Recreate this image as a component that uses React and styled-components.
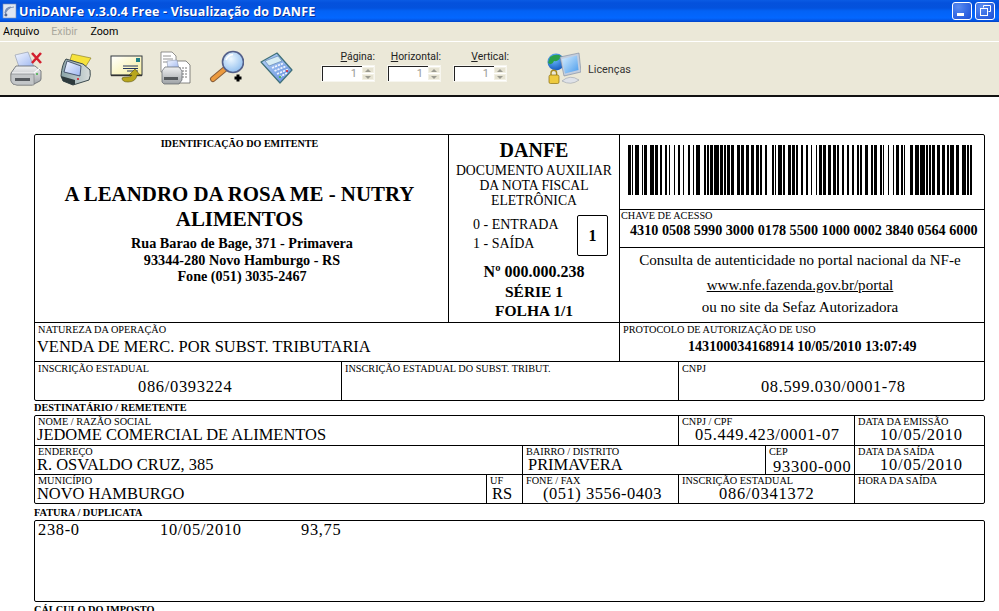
import React from 'react'
import styled, { createGlobalStyle } from 'styled-components'

const GlobalStyle = createGlobalStyle`
  html, body { margin: 0; padding: 0; background: #fff; }
  #root { width: 999px; height: 611px; overflow: hidden; }
`

const Wrapper = styled.div`
  width: 999px;
  height: 611px;
  overflow: hidden;
  display: flex;
  flex-direction: column;
  background: #fff;
`

const TitleBar = styled.div`
  height: 22px;
  flex: none;
  display: flex;
  align-items: center;
  padding: 0 4px 0 2px;
  box-sizing: border-box;
  background: linear-gradient(180deg, #0a5be4 0, #0451dc 3px, #0352dd 8px, #0362f5 11px, #0367ff 18px, #0458e8 20px, #0042c8 22px);
`

const AppIcon = styled.svg`
  width: 16px;
  height: 16px;
  flex: none;
`

const TitleText = styled.div`
  margin-left: 1px;
  flex: 1;
  color: #fff;
  font: bold 12.5px "Open Sans", "Liberation Sans", sans-serif;
  letter-spacing: 0.18px;
  text-shadow: 1px 1px 0 #0a2f9c;
  white-space: nowrap;
`

const WinButton = styled.div`
  width: 20px;
  height: 18px;
  margin-left: 3px;
  box-sizing: border-box;
  border: 1px solid #fff;
  border-radius: 3px;
  position: relative;
  background: radial-gradient(circle at 30% 25%, #5b8cf0 0, #3a6fe6 45%, #1c4fd6 100%);
`

const MinGlyph = styled.span`
  position: absolute;
  left: 4px;
  bottom: 3px;
  width: 7px;
  height: 3px;
  background: #fff;
`

const RestoreGlyph = styled.svg`
  position: absolute;
  left: 4px;
  top: 2px;
  width: 11px;
  height: 11px;
`

const MenuBar = styled.div`
  height: 19px;
  flex: none;
  display: flex;
  align-items: center;
  background: #ebe8d8;
  font: 10.7px Roboto, "Liberation Sans", sans-serif;
`

const MenuItem = styled.span`
  margin-left: ${p => p.$gap}px;
  color: ${p => (p.$disabled ? '#a9a79c' : '#000')};
`

const Toolbar = styled.div`
  height: 56px;
  flex: none;
  box-sizing: border-box;
  border-top: 1px solid #fff;
  border-bottom: 2px solid #111;
  background: #ebe8d8;
  display: flex;
  align-items: center;
  font: 10.4px Roboto, "Liberation Sans", sans-serif;
  color: #222;
`

const ToolButton = styled.div`
  width: 50px;
  height: 36px;
  flex: none;
  margin-top: -2px;
  margin-left: ${p => (p.$first ? '8px' : '0')};
  display: flex;
`

const Tool = styled.svg`
  width: 36px;
  height: 36px;
`

const SpinGroup = styled.div`
  display: flex;
  gap: 12px;
  margin-left: 13px;
  margin-top: -4px;
`

const Spin = styled.div`
  width: 54px;
  display: flex;
  flex-direction: column;
  align-items: flex-end;
`

const SpinLabel = styled.label`
  line-height: 11px;
  height: 14px;
  white-space: nowrap;
  margin-right: ${p => p.$nudge || 0}px;
`

const SpinBox = styled.div`
  width: 54px;
  height: 17px;
  box-sizing: border-box;
  border: 1px solid #f7f6ef;
  background: #fff;
  display: flex;
`

const SpinValue = styled.div`
  flex: 1;
  border-left: 1px solid #222;
  border-top: 1px solid #222;
  color: #9a9a94;
  font-size: 11px;
  line-height: 14px;
  text-align: right;
  padding-right: 5px;
`

const SpinArrows = styled.div`
  width: 12px;
  display: flex;
  flex-direction: column;
  gap: 1px;
  padding: 1px 0;
  box-sizing: border-box;
  background: #fff;
`

const SpinArrow = styled.div`
  flex: 1;
  background: #e6e3d2;
  border: 1px solid #f2f0e4;
  box-sizing: border-box;
  display: flex;
  align-items: center;
  justify-content: center;

  &::after {
    content: '';
    border-left: 3px solid transparent;
    border-right: 3px solid transparent;
    ${p => (p.$down ? 'border-top: 3px solid #9a9a90;' : 'border-bottom: 3px solid #9a9a90;')}
  }
`

const License = styled.div`
  display: flex;
  align-items: center;
  margin-left: 38px;
  gap: 7px;
  margin-top: -2px;
`

const LicenseText = styled.span`
  margin-top: 3px;
  font-size: 10.8px;
  color: #333;
`

const Page = styled.div`
  flex: 1;
  min-height: 0;
  padding: 37px 0 0 34px;
  box-sizing: border-box;
  font-family: "Liberation Serif", "Times New Roman", serif;
  color: #000;
`

const Box = styled.div`
  width: 951px;
  box-sizing: border-box;
  border: 1px solid #000;
  border-radius: 2px;
  ${p => p.$height && `height: ${p.$height}px;`}
`

const Row = styled.div`
  display: grid;
  grid-template-columns: ${p => p.$cols};
  height: ${p => p.$height}px;
  box-sizing: border-box;
  border-bottom: ${p => (p.$last ? 'none' : '1px solid #000')};
`

const Cell = styled.div`
  box-sizing: border-box;
  min-width: 0;
  padding-left: 2px;
  border-right: ${p => (p.$last ? 'none' : '1px solid #000')};
`

const Label = styled.div`
  font-size: 10.25px;
  line-height: 10px;
  padding-left: 1px;
  white-space: nowrap;
  margin-top: ${p => p.$top || 0}px;
`

const Value = styled.div`
  font-size: ${p => p.$size || 16.45}px;
  line-height: ${p => p.$lh || 17}px;
  letter-spacing: ${p => p.$numeric || 0}px;
  white-space: nowrap;
  padding-left: ${p => p.$indent || 0}px;
  margin-top: ${p => p.$top || 0}px;
  font-weight: ${p => (p.$bold ? 'bold' : 'normal')};
`

const SectionTitle = styled.div`
  font-size: 10.3px;
  font-weight: bold;
  height: ${p => p.$height}px;
  line-height: ${p => p.$lh}px;
  white-space: nowrap;
`

const Emitter = styled.div`
  height: 100%;
  text-align: center;
  margin-left: -2px;
`

const EmitterCaption = styled.div`
  font-size: 10.1px;
  font-weight: bold;
  line-height: 12px;
  padding: 3px 4px 0 0;
`

const CompanyName = styled.div`
  font-size: 20.9px;
  font-weight: bold;
  line-height: 25px;
  margin: 32px 23px 0 19px;
`

const CompanyLine = styled.div`
  font-size: 14.2px;
  font-weight: bold;
  line-height: 16.5px;
  padding-left: 1px;
`

const CompanyLines = styled.div`
  margin-top: 3px;
`

const Danfe = styled.div`
  margin-left: -2px;
  display: flex;
  flex-direction: column;
  align-items: center;
  height: 100%;
`

const DanfeTitle = styled.div`
  font-size: 20px;
  font-weight: bold;
  line-height: 26px;
  margin-top: 2px;
`

const DanfeSub = styled.div`
  font-size: 13.7px;
  line-height: 15px;
  text-align: center;
`

const Operation = styled.div`
  width: 100%;
  display: flex;
  padding: 7px 0 0 24px;
  box-sizing: border-box;
`

const OperationList = styled.div`
  flex: 1;
  font-size: 14px;
  line-height: 19px;
`

const OperationBox = styled.div`
  width: 31px;
  height: 41px;
  margin-right: 11px;
  box-sizing: border-box;
  border: 1px solid #000;
  border-radius: 2px;
  font-size: 16px;
  font-weight: bold;
  display: flex;
  align-items: center;
  justify-content: center;
`

const DanfeLine = styled.div`
  font-size: ${p => p.$size}px;
  font-weight: bold;
  line-height: 19px;
  margin-top: ${p => p.$top}px;
`

const RightStack = styled.div`
  margin-left: -2px;
  display: flex;
  flex-direction: column;
  height: 100%;
`

const BarcodeBlock = styled.div`
  height: 75px;
  box-sizing: border-box;
  border-bottom: 1px solid #000;
  padding: 10px 0 0 8px;
`

const KeyBlock = styled.div`
  height: 38px;
  box-sizing: border-box;
  border-bottom: 1px solid #000;
  padding-top: 1px;
`

const KeyValue = styled.div`
  font-size: 14.2px;
  font-weight: bold;
  line-height: 16px;
  padding-left: 10px;
  margin-top: 1px;
  white-space: nowrap;
`

const Consult = styled.div`
  flex: 1;
  text-align: center;
  font-size: 15.1px;
  padding-right: 4px;
`

const ConsultLine = styled.div`
  line-height: ${p => p.$lh}px;
  text-decoration: ${p => (p.$link ? 'underline' : 'none')};
  white-space: nowrap;
`

const InvoiceRow = styled.div`
  display: flex;
  font-size: 16.4px;
  letter-spacing: 0.7px;
  line-height: 18px;
  padding: 0 0 0 3px;
`

const InvoiceCol = styled.span`
  width: ${p => p.$w}px;
`

// Code 128 widths, index = symbol value
const CODE128 = '212222 222122 222221 121223 121322 131222 122213 122312 132212 221213 221312 231212 112232 122132 122231 113222 123122 123221 223211 221132 221231 213212 223112 312131 311222 321122 321221 312212 322112 322211 212123 212321 232121 111323 131123 131321 112313 132113 132311 211313 231113 231311 112133 112331 132131 113123 113321 133121 313121 211331 231131 213113 213311 213131 311123 311321 331121 312113 312311 332111 314111 221411 431111 111224 111422 121124 121421 141122 141221 112214 112412 122114 122411 142112 142211 241211 221114 413111 241112 134111 111242 121142 121241 114212 124112 124211 411212 421112 421211 212141 214121 412121 111143 111341 131141 114113 114311 411113 411311 113141 114131 311141 411131 211412 211214 211232'.split(' ')

function barcodeRuns(key) {
  const values = [105]
  for (let i = 0; i < key.length; i += 2) values.push(Number(key.slice(i, i + 2)))
  const check = values.reduce((sum, v, i) => sum + v * (i === 0 ? 1 : i), 0) % 103
  const pattern = [...values, check].map(v => CODE128[v]).join('') + '2331112'
  return pattern.split('').map(Number)
}

function Barcode({ code }) {
  const runs = barcodeRuns(code)
  const total = runs.reduce((a, b) => a + b, 0)
  let x = 0
  const bars = runs.map((w, i) => {
    const bar = i % 2 === 0 ? <rect key={i} x={x} y="0" width={w + 0.2} height="50" fill="#000" /> : null
    x += w
    return bar
  })
  return (
    <svg width="344" height="50" viewBox={`0 0 ${total} 50`} preserveAspectRatio="none" shapeRendering="crispEdges" style={{ display: 'block' }}>
      {bars}
    </svg>
  )
}

const PrinterBody = () => (
  <g>
    <path d="M3 23 L8 16 H27 L33 21 V29 Q33 31 30 32 L24 35 H9 Q4 35 3 31 Z" fill="url(#grayBody)" stroke="#5d6268" strokeWidth="0.8" />
    <path d="M4 23 H26 L32 18" fill="none" stroke="#fafafa" strokeWidth="1.2" />
    <path d="M3 24 H26 V35 H9 Q4 35 3 31 Z" fill="#c3c6c8" stroke="#6a6e72" strokeWidth="0.5" />
    <rect x="7" y="28" width="15" height="3" fill="#565a5e" />
    <circle cx="29" cy="24" r="1" fill="#3cb043" />
  </g>
)

const Gradients = () => (
  <svg width="0" height="0" style={{ position: 'absolute' }}>
    <defs>
      <linearGradient id="grayBody" x1="0" y1="0" x2="0" y2="1">
        <stop offset="0" stopColor="#f0f1f2" />
        <stop offset="1" stopColor="#9da1a5" />
      </linearGradient>
      <linearGradient id="paperBlue" x1="0" y1="0" x2="1" y2="1">
        <stop offset="0" stopColor="#f4f7ff" />
        <stop offset="1" stopColor="#9db6f0" />
      </linearGradient>
      <linearGradient id="tealBody" x1="0" y1="0" x2="1" y2="0">
        <stop offset="0" stopColor="#8aa4a8" />
        <stop offset="1" stopColor="#d8dddc" />
      </linearGradient>
      <radialGradient id="lens" cx="0.4" cy="0.35" r="0.7">
        <stop offset="0" stopColor="#eef8ff" />
        <stop offset="1" stopColor="#8dbcee" />
      </radialGradient>
      <linearGradient id="envelope" x1="0" y1="0" x2="1" y2="1">
        <stop offset="0" stopColor="#fff" />
        <stop offset="1" stopColor="#f6ed9a" />
      </linearGradient>
      <linearGradient id="calc" x1="0" y1="0" x2="1" y2="1">
        <stop offset="0" stopColor="#b8d4f8" />
        <stop offset="1" stopColor="#5f8cdc" />
      </linearGradient>
      <linearGradient id="monitor" x1="0" y1="0" x2="1" y2="1">
        <stop offset="0" stopColor="#d7eeff" />
        <stop offset="1" stopColor="#4a9cec" />
      </linearGradient>
      <radialGradient id="globe" cx="0.4" cy="0.3" r="0.8">
        <stop offset="0" stopColor="#6fc0ff" />
        <stop offset="1" stopColor="#0c4fb8" />
      </radialGradient>
    </defs>
  </svg>
)

const PrintCancelIcon = () => (
  <Tool viewBox="0 0 36 36">
    <path d="M7 5 L20 2 L26 17 H11 Z" fill="url(#paperBlue)" stroke="#8a94a8" strokeWidth="0.6" />
    <PrinterBody />
    <path d="M24 3 L33 13 M33 3 L24 13" stroke="#d3202f" strokeWidth="2.6" />
  </Tool>
)

const PrintIcon = () => (
  <Tool viewBox="0 0 36 36">
    <path d="M14 4 L33 8 L28 16 L12 10 Z" fill="#f6e23c" stroke="#7d7320" strokeWidth="0.6" />
    <path d="M3 26 Q4 14 8 9 L25 14 L32 20 Q33 26 31 30 L15 35 L5 31 Z" fill="url(#tealBody)" stroke="#3c4a4e" strokeWidth="1" strokeLinejoin="round" />
    <path d="M9 11 L23 16 L22 26 L6 22 Z" fill="url(#paperBlue)" stroke="#2f3c55" strokeWidth="0.8" />
    <path d="M3 26 L17 30 L17 34 L15 35 L5 31 Z" fill="#2e3a3d" />
    <circle cx="20" cy="29" r="1.1" fill="#d3202f" />
  </Tool>
)

const MailIcon = () => (
  <Tool viewBox="0 0 36 36">
    <rect x="3" y="6" width="31" height="19" fill="url(#envelope)" stroke="#33383f" strokeWidth="1" />
    <path d="M3 25.5 H34" stroke="#333" strokeWidth="1.4" fill="none" />
    <rect x="28" y="8" width="4" height="4" fill="#1f7f84" />
    <path d="M15 16 H30 M15 18.5 H30 M19 21 H30" stroke="#26365f" strokeWidth="1.2" />
    <path d="M14 28 Q14 32 20 32 Q28 32 29 25 L32 25 L27 19 L21 25 H24 Q24 27 20 27 Q15 27 14 28 Z" fill="#b8a61c" stroke="#5d5410" strokeWidth="0.6" />
  </Tool>
)

const PreviewIcon = () => (
  <Tool viewBox="0 0 36 36">
    <path d="M3 2 H14 L18 6 V22 H3 Z" fill="#fff" stroke="#666" strokeWidth="0.7" />
    <path d="M5 6 H13 M5 9 H15 M5 12 H15" stroke="#777" strokeWidth="0.8" />
    <path d="M18 11 H28 L32 15 V33 H18 Z" fill="#fff" stroke="#555" strokeWidth="0.7" />
    <path d="M21 18 H30 M21 21 H30 M21 24 H30 M21 27 H30" stroke="#777" strokeWidth="1" strokeDasharray="2 1" />
    <path d="M9 11 L19 10 L21 19 H10 Z" fill="url(#paperBlue)" stroke="#7b86a0" strokeWidth="0.5" />
    <path d="M4 21 L7 17 H21 L24 21 V30 L21 34 H6 L4 32 Z" fill="url(#grayBody)" stroke="#5d6268" strokeWidth="0.7" />
    <rect x="6" y="27" width="14" height="3" fill="#55595d" />
  </Tool>
)

const ZoomIcon = () => (
  <Tool viewBox="0 0 36 36">
    <path d="M5 29 L17 19" stroke="#8a5f3a" strokeWidth="6" strokeLinecap="round" />
    <path d="M5 29 L17 19" stroke="#ec9a3e" strokeWidth="4" strokeLinecap="round" />
    <circle cx="25" cy="12" r="10.5" fill="url(#lens)" stroke="#54608a" strokeWidth="1.6" />
    <path d="M18 10 Q20 5 25 4.5" stroke="#fff" strokeWidth="1.6" fill="none" />
    <path d="M26.5 28 H33.5 M30 24.5 V31.5" stroke="#000" strokeWidth="3" />
  </Tool>
)

const CalcIcon = () => (
  <Tool viewBox="0 0 36 36">
    <path d="M19 3 L3 12 L22 33 L34 20 Z" fill="url(#calc)" stroke="#3f7079" strokeWidth="1.2" strokeLinejoin="round" />
    <path d="M7 11 L20 6 L24 11 L11 16 Z" fill="#d7ecf4" stroke="#547aa8" strokeWidth="0.6" />
    <path d="M14 18 L26 13 M16.5 21 L28.5 16 M19 24 L31 19 M21.5 27 L29 23" stroke="#eef3ff" strokeWidth="1.8" strokeDasharray="2.2 1" />
    <circle cx="29" cy="21" r="1.1" fill="#d3202f" />
    <circle cx="22" cy="27" r="1.1" fill="#3cb043" />
  </Tool>
)

const LicenseIcon = () => (
  <Tool viewBox="0 0 36 36">
    <circle cx="11" cy="12" r="8.5" fill="url(#globe)" />
    <path d="M5 7 Q11 3 16 6 Q14 12 9 11 Q7 16 3 13 Z" fill="#2aa04a" />
    <path d="M15 7 L34 3 L36 22 L19 26 Z" fill="#c4cede" stroke="#7a869a" strokeWidth="0.6" />
    <path d="M17 9 L32 5.5 L33.5 20 L20 23.5 Z" fill="url(#monitor)" />
    <path d="M17 31 Q25 24 34 30 Q26 36 17 31 Z" fill="#dfe2e8" stroke="#8a92a0" strokeWidth="0.5" />
    <path d="M6 26 V23 A2.8 2.8 0 0 1 11.6 23 V26" fill="none" stroke="#a88a20" strokeWidth="1.4" />
    <rect x="4" y="25" width="10" height="8.5" rx="1.5" fill="#eeca3f" stroke="#8a6d10" strokeWidth="0.7" />
  </Tool>
)

function SpinField({ mnemonic, rest, nudge }) {
  return (
    <Spin>
      <SpinLabel $nudge={nudge}><u>{mnemonic}</u>{rest}</SpinLabel>
      <SpinBox>
        <SpinValue>1</SpinValue>
        <SpinArrows>
          <SpinArrow />
          <SpinArrow $down />
        </SpinArrows>
      </SpinBox>
    </Spin>
  )
}

function App() {
  return (
    <Wrapper>
      <GlobalStyle />
      <Gradients />
      <TitleBar>
        <AppIcon viewBox="0 0 16 16">
          <rect x="1" y="1" width="13" height="14" fill="#dfe6f2" stroke="#7d8db0" strokeWidth="0.6" />
          <path d="M3 13 A9 9 0 0 1 12 4 M3 10 A6 6 0 0 1 9 4" stroke="#7b8fb5" strokeWidth="1.2" fill="none" />
          <circle cx="4" cy="12" r="1.4" fill="#55688f" />
        </AppIcon>
        <TitleText>UniDANFe v.3.0.4 Free - Visualização do DANFE</TitleText>
        <WinButton><MinGlyph /></WinButton>
        <WinButton>
          <RestoreGlyph viewBox="0 0 11 11">
            <path d="M3.5 2.5 V0.5 H10.5 V6.5 H8.5" fill="none" stroke="#fff" />
            <rect x="0.5" y="3.5" width="7" height="7" fill="none" stroke="#fff" />
          </RestoreGlyph>
        </WinButton>
      </TitleBar>
      <MenuBar>
        <MenuItem $gap={3}>Arquivo</MenuItem>
        <MenuItem $gap={12} $disabled>Exibir</MenuItem>
        <MenuItem $gap={13}>Zoom</MenuItem>
      </MenuBar>
      <Toolbar>
        <ToolButton $first><PrintCancelIcon /></ToolButton>
        <ToolButton><PrintIcon /></ToolButton>
        <ToolButton><MailIcon /></ToolButton>
        <ToolButton><PreviewIcon /></ToolButton>
        <ToolButton><ZoomIcon /></ToolButton>
        <ToolButton><CalcIcon /></ToolButton>
        <SpinGroup>
          <SpinField mnemonic="P" rest="ágina:" />
          <SpinField mnemonic="H" rest="orizontal:" />
          <SpinField mnemonic="V" rest="ertical:" nudge={-2} />
        </SpinGroup>
        <License>
          <LicenseIcon />
          <LicenseText>Licenças</LicenseText>
        </License>
      </Toolbar>
      <Page>
        <Box>
          <Row $cols="414px 171px 1fr" $height={188}>
            <Cell>
              <Emitter>
                <EmitterCaption>IDENTIFICAÇÃO DO EMITENTE</EmitterCaption>
                <CompanyName>A LEANDRO DA ROSA ME - NUTRY ALIMENTOS</CompanyName>
                <CompanyLines>
                  <CompanyLine>Rua Barao de Bage, 371 - Primavera</CompanyLine>
                  <CompanyLine>93344-280 Novo Hamburgo - RS</CompanyLine>
                  <CompanyLine>Fone (051) 3035-2467</CompanyLine>
                </CompanyLines>
              </Emitter>
            </Cell>
            <Cell>
              <Danfe>
                <DanfeTitle>DANFE</DanfeTitle>
                <DanfeSub>DOCUMENTO AUXILIAR<br />DA NOTA FISCAL<br />ELETRÔNICA</DanfeSub>
                <Operation>
                  <OperationList>0 - ENTRADA<br />1 - SAÍDA</OperationList>
                  <OperationBox>1</OperationBox>
                </Operation>
                <DanfeLine $size={16} $top={6}>Nº 000.000.238</DanfeLine>
                <DanfeLine $size={15.5} $top={1}>SÉRIE 1</DanfeLine>
                <DanfeLine $size={15.5} $top={0}>FOLHA 1/1</DanfeLine>
              </Danfe>
            </Cell>
            <Cell $last>
              <RightStack>
                <BarcodeBlock><Barcode code="43100508599030000178550010000002384005646000" /></BarcodeBlock>
                <KeyBlock>
                  <Label>CHAVE DE ACESSO</Label>
                  <KeyValue>4310 0508 5990 3000 0178 5500 1000 0002 3840 0564 6000</KeyValue>
                </KeyBlock>
                <Consult>
                  <ConsultLine $lh={24}>Consulta de autenticidade no portal nacional da NF-e</ConsultLine>
                  <ConsultLine $lh={26} $link>www.nfe.fazenda.gov.br/portal</ConsultLine>
                  <ConsultLine $lh={18}>ou no site da Sefaz Autorizadora</ConsultLine>
                </Consult>
              </RightStack>
            </Cell>
          </Row>
          <Row $cols="585px 1fr" $height={39}>
            <Cell>
              <Label $top={2}>NATUREZA DA OPERAÇÃO</Label>
              <Value $top={3}>VENDA DE MERC. POR SUBST. TRIBUTARIA</Value>
            </Cell>
            <Cell $last>
              <Label $top={2}>PROTOCOLO DE AUTORIZAÇÃO DE USO</Label>
              <Value $bold $size={14.1} $indent={66} $top={3}>143100034168914 10/05/2010 13:07:49</Value>
            </Cell>
          </Row>
          <Row $cols="307px 337px 1fr" $height={38} $last>
            <Cell>
              <Label $top={2}>INSCRIÇÃO ESTADUAL</Label>
              <Value $numeric={0.7} $indent={101} $top={4}>086/0393224</Value>
            </Cell>
            <Cell>
              <Label $top={2}>INSCRIÇÃO ESTADUAL DO SUBST. TRIBUT.</Label>
            </Cell>
            <Cell $last>
              <Label $top={2}>CNPJ</Label>
              <Value $numeric={0.63} $indent={80} $top={4}>08.599.030/0001-78</Value>
            </Cell>
          </Row>
        </Box>
        <SectionTitle $height={14} $lh={14}>DESTINATÁRIO / REMETENTE</SectionTitle>
        <Box>
          <Row $cols="644px 176px 1fr" $height={30}>
            <Cell>
              <Label $top={1}>NOME / RAZÃO SOCIAL</Label>
              <Value $lh={15}>JEDOME COMERCIAL DE ALIMENTOS</Value>
            </Cell>
            <Cell>
              <Label $top={1}>CNPJ / CPF</Label>
              <Value $lh={15} $numeric={0.63} $indent={14}>05.449.423/0001-07</Value>
            </Cell>
            <Cell $last>
              <Label $top={1}>DATA DA EMISSÃO</Label>
              <Value $lh={15} $numeric={0.8} $indent={23}>10/05/2010</Value>
            </Cell>
          </Row>
          <Row $cols="488px 243px 89px 1fr" $height={29}>
            <Cell>
              <Label $top={1}>ENDEREÇO</Label>
              <Value $lh={15}>R. OSVALDO CRUZ, 385</Value>
            </Cell>
            <Cell>
              <Label $top={1}>BAIRRO / DISTRITO</Label>
              <Value $lh={15} $indent={3}>PRIMAVERA</Value>
            </Cell>
            <Cell>
              <Label $top={1}>CEP</Label>
              <Value $lh={15} $numeric={0.8} $indent={5} $top={2}>93300-000</Value>
            </Cell>
            <Cell $last>
              <Label $top={1}>DATA DA SAÍDA</Label>
              <Value $lh={15} $numeric={0.8} $indent={23}>10/05/2010</Value>
            </Cell>
          </Row>
          <Row $cols="452px 36px 156px 176px 1fr" $height={28} $last>
            <Cell>
              <Label $top={1}>MUNICÍPIO</Label>
              <Value $lh={15}>NOVO HAMBURGO</Value>
            </Cell>
            <Cell>
              <Label $top={1}>UF</Label>
              <Value $lh={15} $indent={3}>RS</Value>
            </Cell>
            <Cell>
              <Label $top={1}>FONE / FAX</Label>
              <Value $lh={15} $numeric={0.53} $indent={18}>(051) 3556-0403</Value>
            </Cell>
            <Cell>
              <Label $top={1}>INSCRIÇÃO ESTADUAL</Label>
              <Value $lh={15} $numeric={0.8} $indent={38}>086/0341372</Value>
            </Cell>
            <Cell $last>
              <Label $top={1}>HORA DA SAÍDA</Label>
            </Cell>
          </Row>
        </Box>
        <SectionTitle $height={16} $lh={17}>FATURA / DUPLICATA</SectionTitle>
        <Box $height={82}>
          <InvoiceRow>
            <InvoiceCol $w={122}>238-0</InvoiceCol>
            <InvoiceCol $w={141}>10/05/2010</InvoiceCol>
            <InvoiceCol>93,75</InvoiceCol>
          </InvoiceRow>
        </Box>
        <SectionTitle $height={16} $lh={16}>CÁLCULO DO IMPOSTO</SectionTitle>
      </Page>
    </Wrapper>
  )
}

export default App
